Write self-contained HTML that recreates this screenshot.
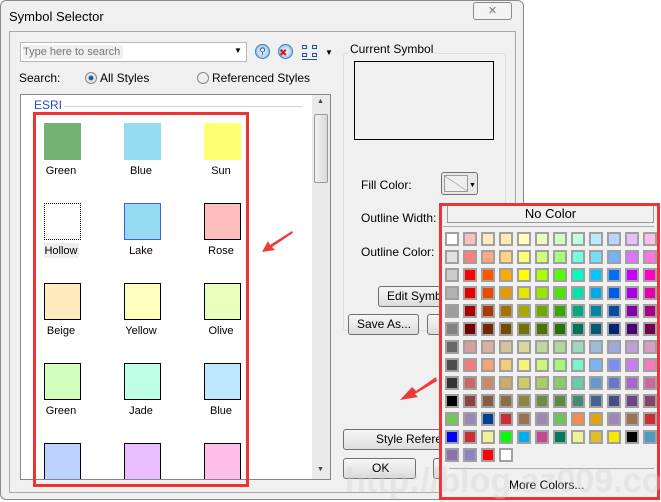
<!DOCTYPE html>
<html><head><meta charset="utf-8"><style>
*{box-sizing:border-box;margin:0;padding:0}
body{width:661px;height:502px;position:relative;overflow:hidden;background:#fff;font-family:"Liberation Sans",sans-serif;font-size:12px;color:#000}
.a{position:absolute}
.btn{position:absolute;border:1px solid #707070;border-radius:3px;background:linear-gradient(#f6f6f6,#dddddd);font-size:12px;line-height:18px;padding-left:8px;white-space:nowrap;overflow:hidden}
.sw{position:absolute;width:37px;height:37px}
.lb{position:absolute;width:60px;text-align:center;font-size:11px}
.pal{position:absolute;left:445px;top:232px;display:grid;grid-template-columns:repeat(12,14px);grid-auto-rows:14px;gap:4px}
.pal i{display:block;border:2px solid #a0a0a0}
</style></head><body>
<div class="a" style="left:190px;top:0;width:140px;height:60px;background:radial-gradient(ellipse at center,#c8fafa,#fff 70%)"></div>
<div class="a" style="left:0;top:0;width:524px;height:500px;background:#f0f0f0;border:1px solid #8a8a8a;border-radius:6px"></div>
<div class="a" style="left:9px;top:9px;font-size:13px">Symbol Selector</div>
<div class="a" style="left:473px;top:2px;width:39px;height:18px;border:1px solid #8a8a8a;border-radius:3px;background:#f4f4f4;color:#777;text-align:center;font-size:11px;line-height:16px">✕</div>
<div class="a" style="left:9px;top:31px;width:507px;height:462px;border:1px solid #a8a8a8;background:#f0f0f0"></div>
<div class="a" style="left:20px;top:42px;width:227px;height:20px;border:1px solid #b8b8b8;background:#fff"></div>
<div class="a" style="left:23px;top:45px;width:100px;height:14px;background:#f0f0f0;color:#777;font-size:11px;line-height:14px">Type here to search</div>
<div class="a" style="left:234px;top:46px;font-size:8px">▼</div>
<div class="a" style="left:255px;top:44px;width:15px;height:15px;border-radius:50%;background:radial-gradient(#fff,#7ab0e0);border:1px solid #3a7cc0;color:#1a4d90;font-size:9px;text-align:center;line-height:13px">&#9906;</div>
<div class="a" style="left:278px;top:44px;width:15px;height:15px;border-radius:50%;background:radial-gradient(#fff,#7ab0e0);border:1px solid #3a7cc0;color:#d02020;font-size:10px;text-align:left;line-height:18px">✖</div>
<div class="a" style="left:302px;top:45px;width:5px;height:4px;border:1px solid #2050a0"></div><div class="a" style="left:312px;top:45px;width:5px;height:4px;border:1px solid #2050a0"></div>
<div class="a" style="left:302px;top:53px;width:5px;height:4px;border:1px solid #2050a0"></div><div class="a" style="left:312px;top:53px;width:5px;height:4px;border:1px solid #2050a0"></div>
<div class="a" style="left:302px;top:59px;width:15px;height:1px;background:#2050a0"></div>
<div class="a" style="left:325px;top:48px;font-size:8px">▼</div>
<div class="a" style="left:19px;top:71px">Search:</div>
<div class="a" style="left:85px;top:72px;width:12px;height:12px;border-radius:50%;border:1px solid #888;background:radial-gradient(#1a5fb0 30%,#e8e8e8 40%)"></div>
<div class="a" style="left:100px;top:71px">All Styles</div>
<div class="a" style="left:197px;top:72px;width:12px;height:12px;border-radius:50%;border:1px solid #888;background:#eee"></div>
<div class="a" style="left:212px;top:71px">Referenced Styles</div>
<div class="a" style="left:20px;top:94px;width:311px;height:386px;border:1px solid #828790;background:#fff"></div>
<div class="a" style="left:312px;top:95px;width:18px;height:384px;background:#eaeaea"></div>
<div class="a" style="left:314px;top:114px;width:14px;height:69px;border:1px solid #999;border-radius:2px;background:linear-gradient(90deg,#f2f2f2,#d8d8d8)"></div>
<div class="a" style="left:317px;top:98px;font-size:7px;color:#444">▲</div>
<div class="a" style="left:317px;top:466px;font-size:7px;color:#444">▼</div>
<div class="a" style="left:34px;top:98px;color:#1e50c8;font-size:12px">ESRI</div>
<div class="a" style="left:64px;top:106px;width:238px;height:1px;background:#c8d4ee"></div>
<div class="sw" style="left:44px;top:123px;background:#73b273"></div>
<div class="sw" style="left:124px;top:123px;background:#97dbf2"></div>
<div class="sw" style="left:204px;top:123px;background:#ffff73"></div>
<div class="lb" style="left:31px;top:165px">Green</div><div class="lb" style="left:111px;top:165px">Blue</div><div class="lb" style="left:191px;top:165px">Sun</div>
<div class="sw" style="left:44px;top:203px;border:1px dotted #000"></div>
<div class="sw" style="left:124px;top:203px;background:#97dbf2;border:1px solid #4060e0"></div>
<div class="sw" style="left:204px;top:203px;background:#ffbebe;border:1px solid #000"></div>
<div class="a" style="left:44px;top:243px;width:35px;height:15px;background:#eee"></div>
<div class="lb" style="left:31px;top:245px">Hollow</div><div class="lb" style="left:111px;top:245px">Lake</div><div class="lb" style="left:191px;top:245px">Rose</div>
<div class="sw" style="left:44px;top:283px;background:#ffebbe;border:1px solid #000"></div>
<div class="sw" style="left:124px;top:283px;background:#ffffbe;border:1px solid #000"></div>
<div class="sw" style="left:204px;top:283px;background:#e9ffbe;border:1px solid #000"></div>
<div class="lb" style="left:31px;top:325px">Beige</div><div class="lb" style="left:111px;top:325px">Yellow</div><div class="lb" style="left:191px;top:325px">Olive</div>
<div class="sw" style="left:44px;top:363px;background:#d3ffbe;border:1px solid #000"></div>
<div class="sw" style="left:124px;top:363px;background:#beffe8;border:1px solid #000"></div>
<div class="sw" style="left:204px;top:363px;background:#bee8ff;border:1px solid #000"></div>
<div class="lb" style="left:31px;top:405px">Green</div><div class="lb" style="left:111px;top:405px">Jade</div><div class="lb" style="left:191px;top:405px">Blue</div>
<div class="sw" style="left:44px;top:443px;height:36px;background:#bed2ff;border:1px solid #000;border-bottom:none"></div>
<div class="sw" style="left:124px;top:443px;height:36px;background:#e8beff;border:1px solid #000;border-bottom:none"></div>
<div class="sw" style="left:204px;top:443px;height:36px;background:#ffbee8;border:1px solid #000;border-bottom:none"></div>
<div class="a" style="left:33px;top:112px;width:216px;height:375px;border:3px solid #f03232"></div>
<svg class="a" style="left:258px;top:228px" width="40" height="30"><path d="M34 3 L12 17 L10 13 L4 24 L17 22 L14 19 L35 5Z" fill="#f03a3a"/></svg>
<div class="a" style="left:343px;top:53px;width:163px;height:278px;border:1px solid #d5dfe5;border-radius:3px"></div>
<div class="a" style="left:348px;top:42px;padding:0 2px;background:#f0f0f0">Current Symbol</div>
<div class="a" style="left:354px;top:61px;width:140px;height:79px;border:1px solid #000"></div>
<div class="a" style="left:361px;top:178px">Fill Color:</div>
<div class="a" style="left:441px;top:172px;width:37px;height:23px;border:1px solid #707070;border-radius:3px;background:#e8e8e8"></div>
<div class="a" style="left:444px;top:175px;width:24px;height:17px;border:1px solid #999;background:linear-gradient(to top right,#eee 48%,#888 50%,#eee 52%)"></div>
<div class="a" style="left:469px;top:182px;font-size:7px">▼</div>
<div class="a" style="left:361px;top:211px">Outline Width:</div>
<div class="a" style="left:361px;top:245px">Outline Color:</div>
<div class="btn" style="left:378px;top:286px;width:70px;height:21px">Edit Symbol...</div>
<div class="btn" style="left:348px;top:314px;width:71px;height:21px">Save As...</div>
<div class="btn" style="left:427px;top:314px;width:30px;height:21px"></div>
<div class="btn" style="left:343px;top:429px;width:100px;height:21px;padding-left:32px">Style References</div>
<div class="btn" style="left:343px;top:458px;width:73px;height:21px;padding-left:28px">OK</div>
<div class="btn" style="left:433px;top:458px;width:20px;height:21px"></div>
<svg class="a" style="left:398px;top:375px" width="40" height="30"><path d="M38 2 L18 16 L14 12 L2 25 L20 22 L17 19 L39 6Z" fill="#f03a3a"/></svg>
<div class="a" style="left:439px;top:203px;width:221px;height:299px;background:#f0f0f0"></div>
<div class="a" style="left:447px;top:205px;width:207px;height:18px;border:1px solid #999;background:#f0f0f0;text-align:center;font-size:13px;line-height:16px">No Color</div>
<div class="a" style="left:443px;top:226px;width:211px;height:1px;background:#aaa"></div>
<div class="pal">
<i style="background:#fff"></i><i style="background:#ffbebe"></i><i style="background:#ffebbe"></i><i style="background:#ffebaf"></i><i style="background:#ffffbe"></i><i style="background:#e9ffbe"></i><i style="background:#d3ffbe"></i><i style="background:#beffe8"></i><i style="background:#bee8ff"></i><i style="background:#bed2ff"></i><i style="background:#e8beff"></i><i style="background:#ffbee8"></i>
<i style="background:#e1e1e1"></i><i style="background:#ff7f7f"></i><i style="background:#ffa77f"></i><i style="background:#ffd37f"></i><i style="background:#ffff73"></i><i style="background:#d1ff73"></i><i style="background:#a3ff73"></i><i style="background:#73ffdf"></i><i style="background:#73dfff"></i><i style="background:#73b2ff"></i><i style="background:#df73ff"></i><i style="background:#ff73df"></i>
<i style="background:#ccc"></i><i style="background:#f00"></i><i style="background:#ff5500"></i><i style="background:#ffaa00"></i><i style="background:#ff0"></i><i style="background:#aaff00"></i><i style="background:#55ff00"></i><i style="background:#00ffc5"></i><i style="background:#00c5ff"></i><i style="background:#0070ff"></i><i style="background:#c500ff"></i><i style="background:#ff00c5"></i>
<i style="background:#b2b2b2"></i><i style="background:#e60000"></i><i style="background:#e64c00"></i><i style="background:#e69800"></i><i style="background:#e6e600"></i><i style="background:#98e600"></i><i style="background:#4ce600"></i><i style="background:#00e6a9"></i><i style="background:#00a9e6"></i><i style="background:#005ce6"></i><i style="background:#a900e6"></i><i style="background:#e600a9"></i>
<i style="background:#9c9c9c"></i><i style="background:#a80000"></i><i style="background:#a83800"></i><i style="background:#a87000"></i><i style="background:#a8a800"></i><i style="background:#70a800"></i><i style="background:#38a800"></i><i style="background:#00a884"></i><i style="background:#0084a8"></i><i style="background:#004da8"></i><i style="background:#8400a8"></i><i style="background:#a80084"></i>
<i style="background:#828282"></i><i style="background:#730000"></i><i style="background:#732600"></i><i style="background:#734c00"></i><i style="background:#737300"></i><i style="background:#4c7300"></i><i style="background:#267300"></i><i style="background:#00735a"></i><i style="background:#005a73"></i><i style="background:#002673"></i><i style="background:#4c0073"></i><i style="background:#73004c"></i>
<i style="background:#686868"></i><i style="background:#d79e9e"></i><i style="background:#d7b09e"></i><i style="background:#d7c29e"></i><i style="background:#d7d79e"></i><i style="background:#c2d79e"></i><i style="background:#b0d79e"></i><i style="background:#9ed7c2"></i><i style="background:#9ebbd7"></i><i style="background:#9eaad7"></i><i style="background:#c29ed7"></i><i style="background:#d79ec2"></i>
<i style="background:#4e4e4e"></i><i style="background:#f57a7a"></i><i style="background:#f5a27a"></i><i style="background:#f5ca7a"></i><i style="background:#f5f57a"></i><i style="background:#cdf57a"></i><i style="background:#a5f57a"></i><i style="background:#7af5ca"></i><i style="background:#7ab6f5"></i><i style="background:#7a8ef5"></i><i style="background:#ca7af5"></i><i style="background:#f57ab6"></i>
<i style="background:#343434"></i><i style="background:#cd6666"></i><i style="background:#cd8966"></i><i style="background:#cdaa66"></i><i style="background:#cdcd66"></i><i style="background:#aacd66"></i><i style="background:#89cd66"></i><i style="background:#66cdab"></i><i style="background:#6699cd"></i><i style="background:#6677cd"></i><i style="background:#aa66cd"></i><i style="background:#cd6699"></i>
<i style="background:#000"></i><i style="background:#894444"></i><i style="background:#895a44"></i><i style="background:#897044"></i><i style="background:#898944"></i><i style="background:#728944"></i><i style="background:#5c8944"></i><i style="background:#448970"></i><i style="background:#446589"></i><i style="background:#444f89"></i><i style="background:#704489"></i><i style="background:#894465"></i>
<i style="background:#70c656"></i><i style="background:#9c88b5"></i><i style="background:#003f91"></i><i style="background:#cc2f33"></i><i style="background:#9a7450"></i><i style="background:#9e88b8"></i><i style="background:#6fc35a"></i><i style="background:#f28c49"></i><i style="background:#e0a511"></i><i style="background:#9e88b8"></i><i style="background:#9a7450"></i><i style="background:#cc2f33"></i>
<i style="background:#00f"></i><i style="background:#cc2f33"></i><i style="background:#eef296"></i><i style="background:#0f0"></i><i style="background:#00aeef"></i><i style="background:#c44892"></i><i style="background:#007a5e"></i><i style="background:#eef296"></i><i style="background:#e0bd2a"></i><i style="background:#f5ea00"></i><i style="background:#000"></i><i style="background:#4b9bc4"></i>
<i style="background:#8b72b0"></i><i style="background:#8d84c6"></i><i style="background:#f00"></i><i style="background:#fff"></i>
</div>
<div class="a" style="left:449px;top:468px;width:205px;height:1px;background:#aaa"></div>
<div class="a" style="left:509px;top:478px;font-size:12px">More Colors...</div>
<div class="a" style="left:439px;top:203px;width:221px;height:297px;border:3px solid #f03232"></div>
<div class="a" style="left:345px;top:462px;font-size:34px;font-weight:bold;color:rgba(210,210,210,0.35);white-space:nowrap">http://blog.az009.com</div>
</body></html>
